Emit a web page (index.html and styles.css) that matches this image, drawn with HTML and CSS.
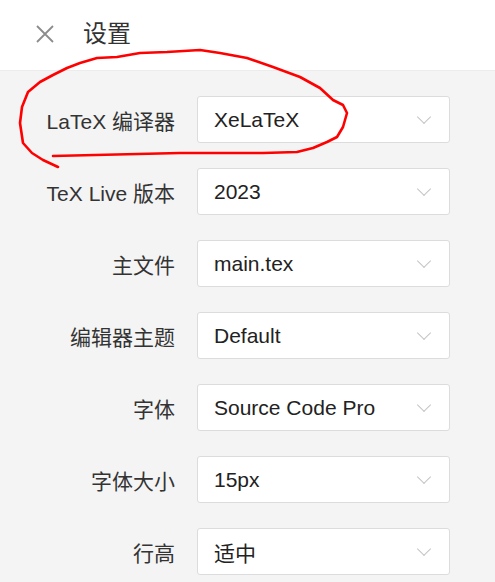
FILE: index.html
```html
<!DOCTYPE html>
<html lang="zh-CN">
<head>
<meta charset="UTF-8">
<title>设置</title>
<link rel="stylesheet" href="styles.css">
</head>
<body>
<div class="panel">
  <div class="header">
    <svg class="close" width="18" height="18" viewBox="0 0 18 18">
      <path d="M1 1L17 17M17 1L1 17" stroke="#8c8c8c" stroke-width="1.8" fill="none"/>
    </svg>
    <span class="title">设置</span>
  </div>

  <div class="form">
    <div class="row">
      <label>LaTeX 编译器</label>
      <div class="select"><span>XeLaTeX</span><i class="arrow"></i></div>
    </div>
    <div class="row">
      <label>TeX Live 版本</label>
      <div class="select"><span>2023</span><i class="arrow"></i></div>
    </div>
    <div class="row">
      <label>主文件</label>
      <div class="select"><span>main.tex</span><i class="arrow"></i></div>
    </div>
    <div class="row">
      <label>编辑器主题</label>
      <div class="select"><span>Default</span><i class="arrow"></i></div>
    </div>
    <div class="row">
      <label>字体</label>
      <div class="select"><span>Source Code Pro</span><i class="arrow"></i></div>
    </div>
    <div class="row">
      <label>字体大小</label>
      <div class="select"><span>15px</span><i class="arrow"></i></div>
    </div>
    <div class="row">
      <label>行高</label>
      <div class="select"><span>适中</span><i class="arrow"></i></div>
    </div>
  </div>

  <!-- hand-drawn red mark around the first setting -->
  <svg class="mark" width="495" height="582" viewBox="0 0 495 582">
    <path d="M58 167 L43 160 L32 153 L23 143 L20 123 L22 107 L28 92 L40 82 L53 75 L67 68 L80 63 L97 58 L117 57 L140 53 L167 52 L200 50 L220 53 L247 58 L273 67 L300 77 L320 88 L333 100 L343 105 L347 113 L343 127 L337 137 L327 142 L313 148 L297 152 L263 153 L230 153 L180 153 L53 156"
      stroke="#ff0000" stroke-width="2.6" fill="none" stroke-linecap="round" stroke-linejoin="round"/>
  </svg>
</div>
</body>
</html>
```

FILE: styles.css
```css
body{margin:0;background:#f4f4f4;font-family:"Liberation Sans","Noto Sans CJK SC",sans-serif;color:#333;}
.panel{position:relative;width:495px;height:582px;overflow:hidden;background:#f4f4f4;}
.header{background:#fff;display:flex;align-items:center;padding-left:36px;border-bottom:1px solid #ececec;box-sizing:border-box;height:71px;}
.close{margin-top:-2px;}
.title{margin-left:29px;font-size:24px;color:#333;margin-top:-8px;}
.form{padding-top:25px;display:flex;flex-direction:column;gap:25px;}
.row{display:flex;align-items:center;gap:22px;}
.row label{width:175px;text-align:right;font-size:21px;color:#333;}
.select{width:253px;height:47px;box-sizing:border-box;background:#fff;border:1px solid #dcdcdc;border-radius:3px;display:flex;align-items:center;justify-content:space-between;padding:0 20px 0 16px;font-size:21px;color:#222;}
.arrow{width:9px;height:9px;border-right:1.5px solid #c4c4c4;border-bottom:1.5px solid #c4c4c4;transform:rotate(45deg);margin-top:-6px;}
.mark{position:absolute;left:0;top:0;pointer-events:none;}
```
